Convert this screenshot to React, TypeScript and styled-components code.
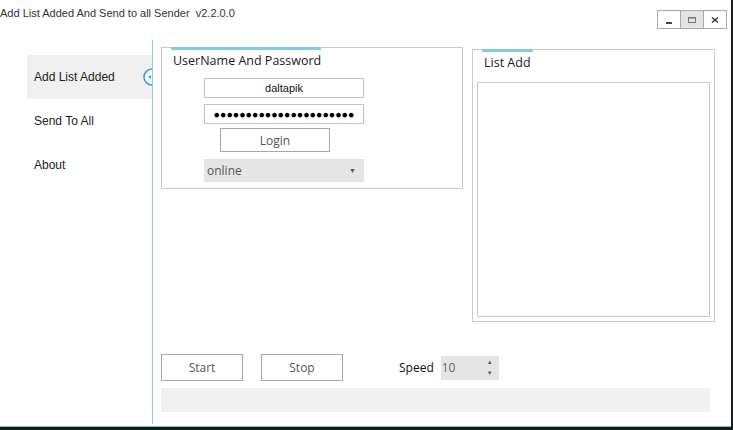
import styled, { createGlobalStyle } from 'styled-components';

const GlobalStyle = createGlobalStyle`
  html, body {
    margin: 0;
    padding: 0;
    background: #fff;
  }
  body {
    font-family: 'Liberation Sans', Arial, sans-serif;
    color: #1e1e1e;
  }
`;

const Window = styled.div`
  width: 733px;
  height: 430px;
  box-sizing: border-box;
  display: flex;
  flex-direction: column;
  background: #fff;
  border-right: 2px solid #1c1f20;
  border-bottom: 3px solid #16191a;
  box-shadow: inset 0 -1px 0 #6fc7d8;
  overflow: hidden;
`;

const TitleBar = styled.div`
  height: 40px;
  flex: none;
  display: flex;
  justify-content: space-between;
  align-items: flex-start;
`;

const Title = styled.div`
  font-size: 11px;
  color: #333;
  padding-top: 7px;
  white-space: pre;
`;

const WinButtons = styled.div`
  display: flex;
  margin-top: 10px;
  margin-right: 4px;
`;

const WinButton = styled.div<{ $active?: boolean }>`
  width: 22px;
  height: 17px;
  border: 1px solid #a9a9a9;
  margin-left: -1px;
  background: ${(p) => (p.$active ? '#e3e3e3' : '#fff')};
  display: flex;
  align-items: center;
  justify-content: center;
  color: #444;
`;

const Body = styled.div`
  flex: 1;
  display: flex;
  min-height: 0;
`;

const Sidebar = styled.nav`
  width: 153px;
  flex: none;
  box-sizing: border-box;
  border-right: 1px solid #8ccbe6;
  padding: 15px 0 0 27px;
  margin-bottom: 3px;
`;

const NavItem = styled.div<{ $active?: boolean }>`
  position: relative;
  height: 44px;
  display: flex;
  align-items: center;
  padding-left: 7px;
  font-size: 12px;
  color: #222;
  background: ${(p) => (p.$active ? '#eff0ef' : 'transparent')};
`;

const NavMarker = styled.svg`
  position: absolute;
  right: 0;
  top: 13px;
`;

const Main = styled.div`
  flex: 1;
  display: flex;
  flex-direction: column;
  padding: 7px 18px 0 8px;
`;

const TopRow = styled.div`
  display: flex;
  gap: 9px;
  align-items: flex-start;
`;

const GroupBox = styled.div<{ $width: number; $height: number; $offset?: number }>`
  position: relative;
  box-sizing: border-box;
  width: ${(p) => p.$width}px;
  height: ${(p) => p.$height}px;
  margin-top: ${(p) => p.$offset || 0}px;
  border: 1px solid #cbcbc2;
  display: flex;
  flex-direction: column;
`;

const TabBar = styled.div<{ $width: number }>`
  position: absolute;
  top: -1px;
  left: 9px;
  width: ${(p) => p.$width}px;
  height: 3px;
  background: #7fcdee;
`;

const GroupTitle = styled.div`
  font-family: 'Open Sans', 'Noto Sans', sans-serif;
  font-size: 12.5px;
  color: #1a1a1a;
  padding: 4px 0 0 11px;
  height: 20px;
`;

const Form = styled.div`
  display: flex;
  flex-direction: column;
  align-items: flex-start;
  margin: 6px 0 0 42px;
`;

const TextField = styled.div<{ $gap?: number }>`
  box-sizing: border-box;
  width: 160px;
  height: 20px;
  margin-top: ${(p) => p.$gap || 0}px;
  border: 1px solid #c4c4c4;
  display: flex;
  align-items: center;
  justify-content: center;
  font-size: 11px;
  color: #111;
  overflow: hidden;
`;

const Dots = styled.span`
  font-size: 10.6px;
  letter-spacing: 0;
  color: #000;
`;

const Button = styled.div<{ $width: number; $height: number }>`
  box-sizing: border-box;
  width: ${(p) => p.$width}px;
  height: ${(p) => p.$height}px;
  border: 1px solid #a7a7a7;
  display: flex;
  align-items: center;
  justify-content: center;
  font-family: 'Open Sans', 'Noto Sans', sans-serif;
  font-size: 12px;
  color: #555;
  background: #fff;
`;

const LoginButton = styled(Button)`
  margin: 4px 0 0 16px;
`;

const Select = styled.div`
  box-sizing: border-box;
  width: 160px;
  height: 23px;
  margin-top: 7px;
  background: #e5e5e5;
  display: flex;
  align-items: center;
  justify-content: space-between;
  padding: 0 8px 0 3px;
  font-family: 'Open Sans', 'Noto Sans', sans-serif;
  font-size: 12px;
  color: #555;
`;

const Caret = styled.span`
  font-size: 7px;
  color: #555;
`;

const ListBox = styled.div`
  flex: 1;
  margin: 8px 4px 4px 4px;
  border: 1px solid #cbcbc2;
`;

const Controls = styled.div`
  display: flex;
  align-items: center;
  margin-top: 32px;
  height: 27px;
`;

const StopButton = styled(Button)`
  margin-left: 18px;
`;

const SpeedLabel = styled.div`
  font-family: 'Open Sans', 'Noto Sans', sans-serif;
  font-size: 12px;
  color: #111;
  margin-left: 56px;
`;

const Spinner = styled.div`
  box-sizing: border-box;
  width: 58px;
  height: 24px;
  margin-left: 7px;
  background: #e5e5e5;
  display: flex;
  align-items: center;
  justify-content: space-between;
  padding: 0 6px 0 1px;
  font-family: 'Open Sans', 'Noto Sans', sans-serif;
  font-size: 12px;
  color: #666;
`;

const Arrows = styled.div`
  display: flex;
  flex-direction: column;
  font-size: 6px;
  line-height: 11px;
  color: #555;
`;

const Progress = styled.div`
  width: 549px;
  height: 24px;
  margin-top: 7px;
  background: #f0f1ef;
`;

export default function App() {
  return (
    <>
      <GlobalStyle />
      <Window>
        <TitleBar>
          <Title>{'Add List Added And Send to all Sender  v2.2.0.0'}</Title>
          <WinButtons>
            <WinButton>
              <svg width="10" height="10" viewBox="0 0 10 10">
                <rect x="2" y="7" width="6" height="2" fill="#444" />
              </svg>
            </WinButton>
            <WinButton $active>
              <svg width="10" height="10" viewBox="0 0 10 10">
                <rect x="1.5" y="2.5" width="7" height="5" fill="none" stroke="#777" />
                <rect x="1" y="2" width="8" height="1.5" fill="#777" />
              </svg>
            </WinButton>
            <WinButton>
              <svg width="10" height="10" viewBox="0 0 10 10">
                <path d="M2 2.5 L8 7.5 M8 2.5 L2 7.5" stroke="#333" strokeWidth="1.5" />
              </svg>
            </WinButton>
          </WinButtons>
        </TitleBar>
        <Body>
          <Sidebar>
            <NavItem $active>
              Add List Added
              <NavMarker width="9" height="18" viewBox="0 0 9 18">
                <path d="M9 1 A8 8 0 0 0 9 17" fill="#fff" stroke="#3d9be0" strokeWidth="1.6" />
                <path d="M5 9 L8 7 L8 11 Z" fill="#3d9be0" />
              </NavMarker>
            </NavItem>
            <NavItem>Send To All</NavItem>
            <NavItem>About</NavItem>
          </Sidebar>
          <Main>
            <TopRow>
              <GroupBox $width={302} $height={142}>
                <TabBar $width={150} />
                <GroupTitle>UserName And Password</GroupTitle>
                <Form>
                  <TextField>daltapik</TextField>
                  <TextField $gap={6}>
                    <Dots>{'●'.repeat(22)}</Dots>
                  </TextField>
                  <LoginButton $width={110} $height={24}>
                    Login
                  </LoginButton>
                  <Select>
                    online
                    <Caret>▼</Caret>
                  </Select>
                </Form>
              </GroupBox>
              <GroupBox $width={243} $height={273} $offset={2}>
                <TabBar $width={51} />
                <GroupTitle>List Add</GroupTitle>
                <ListBox />
              </GroupBox>
            </TopRow>
            <Controls>
              <Button $width={82} $height={27}>
                Start
              </Button>
              <StopButton $width={82} $height={27}>
                Stop
              </StopButton>
              <SpeedLabel>Speed</SpeedLabel>
              <Spinner>
                10
                <Arrows>
                  <span>▲</span>
                  <span>▼</span>
                </Arrows>
              </Spinner>
            </Controls>
            <Progress />
          </Main>
        </Body>
      </Window>
    </>
  );
}
